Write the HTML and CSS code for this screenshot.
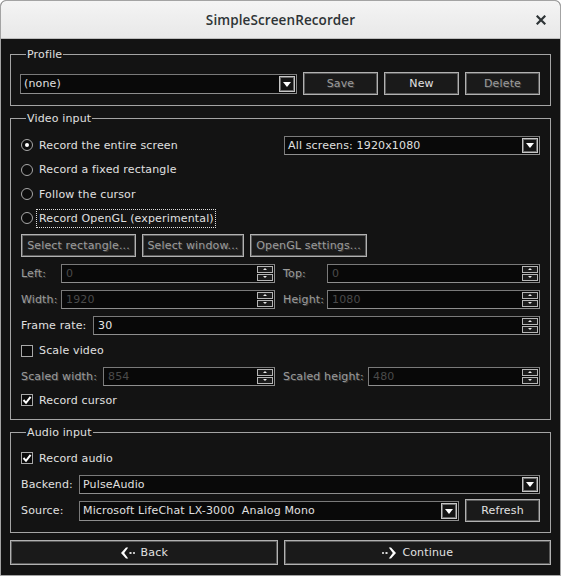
FILE: index.html
```html
<!DOCTYPE html>
<html>
<head>
<meta charset="utf-8">
<link rel="stylesheet" href="styles.css">
</head>
<body>
<div class="window">
  <div class="titlebar">
    <span></span>
    <span class="title">SimpleScreenRecorder</span>
    <span class="close">
      <svg width="10" height="10" viewBox="0 0 10 10"><path d="M1.5 1.5 L8.5 8.5 M8.5 1.5 L1.5 8.5" stroke="#2e3436" stroke-width="2.2" stroke-linecap="square"/></svg>
    </span>
  </div>
  <div class="content">
    <fieldset class="group g-profile">
      <legend>Profile</legend>
      <div class="row r-profile">
        <div class="combo grow"><span class="combo-text">(none)</span><span class="drop"></span></div>
        <button class="btn w-prof disabled">Save</button>
        <button class="btn w-prof">New</button>
        <button class="btn w-prof disabled">Delete</button>
      </div>
    </fieldset>

    <fieldset class="group g-video">
      <legend>Video input</legend>
      <div class="row r-radio h24">
        <span class="radio checked"></span><span class="opt">Record the entire screen</span>
        <div class="combo screens"><span class="combo-text">All screens: 1920x1080</span><span class="drop"></span></div>
      </div>
      <div class="row r-radio h25">
        <span class="radio"></span><span class="opt">Record a fixed rectangle</span>
      </div>
      <div class="row r-radio h24">
        <span class="radio"></span><span class="opt">Follow the cursor</span>
      </div>
      <div class="row r-radio h24">
        <span class="radio"></span><span class="opt focus">Record OpenGL (experimental)</span>
      </div>
      <div class="row r-buttons">
        <button class="btn disabled w-selrect">Select rectangle...</button>
        <button class="btn disabled w-selwin">Select window...</button>
        <button class="btn disabled w-opengl">OpenGL settings...</button>
      </div>
      <div class="row r-spin">
        <span class="lbl disabled w-l1">Left:</span>
        <div class="spin w-f1"><span class="val dim">0</span><span class="spin-btns"><span class="sb up"></span><span class="sb down"></span></span></div>
        <span class="sep"></span>
        <span class="lbl disabled w-l2">Top:</span>
        <div class="spin grow"><span class="val dim">0</span><span class="spin-btns"><span class="sb up"></span><span class="sb down"></span></span></div>
      </div>
      <div class="row r-spin">
        <span class="lbl disabled w-l1">Width:</span>
        <div class="spin w-f1"><span class="val dim">1920</span><span class="spin-btns"><span class="sb up"></span><span class="sb down"></span></span></div>
        <span class="sep"></span>
        <span class="lbl disabled w-l2">Height:</span>
        <div class="spin grow"><span class="val dim">1080</span><span class="spin-btns"><span class="sb up"></span><span class="sb down"></span></span></div>
      </div>
      <div class="row r-spin">
        <span class="lbl w-fr">Frame rate:</span>
        <div class="spin grow"><span class="val">30</span><span class="spin-btns"><span class="sb up"></span><span class="sb down"></span></span></div>
      </div>
      <div class="row r-check">
        <span class="check"></span><span class="opt">Scale video</span>
      </div>
      <div class="row r-spin">
        <span class="lbl disabled w-sw">Scaled width:</span>
        <div class="spin w-f2"><span class="val dim">854</span><span class="spin-btns"><span class="sb up"></span><span class="sb down"></span></span></div>
        <span class="sep"></span>
        <span class="lbl disabled w-sh">Scaled height:</span>
        <div class="spin grow"><span class="val dim">480</span><span class="spin-btns"><span class="sb up"></span><span class="sb down"></span></span></div>
      </div>
      <div class="row r-check last">
        <span class="check checked"><svg width="10" height="10" viewBox="0 0 10 10"><path d="M1.5 5 L4 7.8 L8.6 1.8" fill="none" stroke="#fff" stroke-width="2"/></svg></span><span class="opt">Record cursor</span>
      </div>
    </fieldset>

    <fieldset class="group g-audio">
      <legend>Audio input</legend>
      <div class="row r-check h24">
        <span class="check checked"><svg width="10" height="10" viewBox="0 0 10 10"><path d="M1.5 5 L4 7.8 L8.6 1.8" fill="none" stroke="#fff" stroke-width="2"/></svg></span><span class="opt">Record audio</span>
      </div>
      <div class="row r-backend">
        <span class="lbl w-al">Backend:</span>
        <div class="combo grow"><span class="combo-text">PulseAudio</span><span class="drop"></span></div>
      </div>
      <div class="row r-source">
        <span class="lbl w-al">Source:</span>
        <div class="combo grow"><span class="combo-text">Microsoft LifeChat LX-3000&nbsp; Analog Mono</span><span class="drop"></span></div>
        <button class="btn w-refresh">Refresh</button>
      </div>
    </fieldset>

    <div class="row r-nav">
      <button class="btn nav">
        <svg class="nav-icon" width="16" height="14" viewBox="0 0 16 14"><path d="M6 1.5 L1 7 L6 12.5 L8.2 12.5 L4.2 7 L8.2 1.5 Z" fill="#fff"/><rect x="9.5" y="6" width="2" height="2" fill="#ddd"/><rect x="13" y="6" width="2" height="2" fill="#bbb"/></svg>
        <span>Back</span>
      </button>
      <button class="btn nav">
        <svg class="nav-icon" width="16" height="14" viewBox="0 0 16 14"><rect x="1" y="6" width="2" height="2" fill="#bbb"/><rect x="4.5" y="6" width="2" height="2" fill="#ddd"/><path d="M10 1.5 L15 7 L10 12.5 L7.8 12.5 L11.8 7 L7.8 1.5 Z" fill="#fff"/></svg>
        <span>Continue</span>
      </button>
    </div>
  </div>
</div>
</body>
</html>
```

FILE: styles.css
```css
html, body {
  margin: 0;
  padding: 0;
  background: #ffffff;
}

.window {
  width: 561px;
  height: 576px;
  box-sizing: border-box;
  border: 1px solid #a3a3a3;
  border-radius: 6px 6px 0 0;
  overflow: hidden;
  background: #131313;
  display: flex;
  flex-direction: column;
  font-family: "DejaVu Sans", sans-serif;
  font-size: 11px;
  letter-spacing: 0.15px;
  color: #e0e0e0;
}

.titlebar {
  height: 38px;
  flex: none;
  box-sizing: border-box;
  background: linear-gradient(#f4f4f4, #e8e8e8);
  border-bottom: 1px solid #bdbdbd;
  display: grid;
  grid-template-columns: 1fr auto 1fr;
  align-items: center;
  letter-spacing: normal;
}

.title {
  font-family: "Open Sans", sans-serif;
  font-weight: 600;
  font-size: 13.5px;
  color: #2e3436;
  letter-spacing: 0.1px;
}

.close {
  justify-self: end;
  margin-right: 14px;
  display: flex;
  align-items: center;
}

.content {
  flex: 1;
  padding: 9px 9px 0 9px;
  display: flex;
  flex-direction: column;
}

.group {
  margin: 0;
  border: 1px solid #a4a4a4;
  padding: 0 10px 0 9px;
  min-width: 0;
}

.group legend {
  margin-left: 6px;
  padding: 0 1px;
  line-height: 13px;
  font-size: 11px;
  color: #e0e0e0;
}

.g-profile { padding-top: 11px; padding-bottom: 10px; }
.g-video { margin-top: 6px; padding-top: 8px; padding-bottom: 8px; }
.g-audio { margin-top: 6px; padding-top: 7px; padding-bottom: 10px; }

.row {
  display: flex;
  align-items: center;
}

.grow { flex: 1; min-width: 0; }

.r-profile { height: 23px; gap: 6px; }
.w-prof { width: 75px; }

.h24 { height: 24px; }
.h25 { height: 25px; }

.radio {
  width: 12px;
  height: 12px;
  box-sizing: border-box;
  border-radius: 50%;
  border: 1.5px solid #a8a8a8;
  background: #0c0c0c;
  margin-left: 1px;
  flex: none;
  display: flex;
  align-items: center;
  justify-content: center;
}

.radio.checked::after {
  content: "";
  width: 4px;
  height: 4px;
  border-radius: 50%;
  background: #ffffff;
}

.opt {
  margin-left: 6px;
  white-space: nowrap;
  line-height: 15px;
}

.opt.focus {
  outline: 1px dotted #e0e0e0;
  outline-offset: 1px;
  margin-left: 5px;
  padding-left: 1px;
}

.combo {
  display: flex;
  align-items: center;
  height: 20px;
  box-sizing: border-box;
  border: 1px solid #8e8e8e;
  border-top-color: #7a7a7a;
  border-left-color: #7a7a7a;
  background: #090909;
}

.combo.screens {
  margin-left: auto;
  width: 256px;
  height: 19px;
  flex: none;
}

.combo-text {
  flex: 1;
  padding-left: 3px;
  white-space: nowrap;
  overflow: hidden;
}

.drop {
  width: 16px;
  height: 16px;
  box-sizing: border-box;
  border: 1px solid #c6c6c6;
  box-shadow: inset 0 0 0 1px #6a6a6a;
  background: #141414;
  margin-right: 1px;
  flex: none;
  display: flex;
  align-items: center;
  justify-content: center;
}

.combo.screens .drop { height: 15px; }

.drop::after {
  content: "";
  width: 0;
  height: 0;
  border-left: 4px solid transparent;
  border-right: 4px solid transparent;
  border-top: 5px solid #ffffff;
  margin-top: 1px;
}

.btn {
  font-family: inherit;
  font-size: 11px;
  letter-spacing: inherit;
  color: #e2e2e2;
  background: #1a1a1a;
  border: 1px solid #b2b2b2;
  box-shadow: inset 0 0 0 1px #5a5a5a;
  padding: 0;
  margin: 0;
  box-sizing: border-box;
  height: 23px;
  white-space: nowrap;
}

.btn.disabled, .lbl.disabled {
  color: #9c9c9c;
  text-shadow: 1px 1px 0 #3e3e3e;
}

.r-buttons { height: 23px; margin-top: 4px; gap: 6px; padding-left: 1px; }
.w-selrect { width: 115px; }
.w-selwin { width: 102px; }
.w-opengl { width: 117px; }

.r-spin { height: 26px; }
.r-buttons + .r-spin { margin-top: 3px; }

.lbl {
  padding-left: 1px;
  box-sizing: border-box;
  white-space: nowrap;
  flex: none;
}

.w-l1 { width: 41px; }
.w-l2 { width: 45px; }
.w-f1 { width: 214px; flex: none; }
.w-fr { width: 73px; }
.w-sw { width: 83px; }
.w-sh { width: 86px; }
.w-f2 { width: 172px; flex: none; }
.sep { width: 7px; flex: none; }

.spin {
  display: flex;
  align-items: center;
  height: 19px;
  box-sizing: border-box;
  border: 1px solid #8e8e8e;
  border-top-color: #7a7a7a;
  border-left-color: #7a7a7a;
  background: #080808;
}

.spin .val {
  flex: 1;
  padding-left: 4px;
  color: #e8e8e8;
}

.spin .val.dim { color: #4a4a4a; }

.spin-btns {
  display: flex;
  flex-direction: column;
  gap: 1px;
  margin-right: 1px;
}

.sb {
  width: 16px;
  height: 7px;
  box-sizing: border-box;
  border: 1px solid #b6b6b6;
  background: #1b1b1b;
  display: flex;
  align-items: center;
  justify-content: center;
}

.sb.up::after {
  content: "";
  border-left: 2px solid transparent;
  border-right: 2px solid transparent;
  border-bottom: 2px solid #e8e8e8;
}

.sb.down::after {
  content: "";
  border-left: 2px solid transparent;
  border-right: 2px solid transparent;
  border-top: 2px solid #e8e8e8;
}

.r-check { height: 25px; }
.r-check.last { height: 22px; }
.g-audio .r-check { height: 24px; }

.check {
  width: 12px;
  height: 12px;
  box-sizing: border-box;
  border: 1.5px solid #a8a8a8;
  background: #0a0a0a;
  margin-left: 1px;
  flex: none;
  display: flex;
  align-items: center;
  justify-content: center;
}

.r-backend { height: 20px; margin-top: 4px; }
.r-backend .combo { height: 19px; }
.r-backend .drop { height: 15px; }
.w-al { width: 59px; }

.r-source { height: 23px; margin-top: 5px; gap: 6px; }
.r-source .lbl { margin-right: -6px; }
.w-refresh { width: 75px; height: 23px; flex: none; }

.r-nav { margin-top: 7px; gap: 6px; height: 25px; }
.btn.nav {
  flex: 1;
  height: 25px;
  display: flex;
  align-items: center;
  justify-content: center;
  gap: 5px;
  font-size: 11px;
}

.nav-icon { flex: none; }
```
